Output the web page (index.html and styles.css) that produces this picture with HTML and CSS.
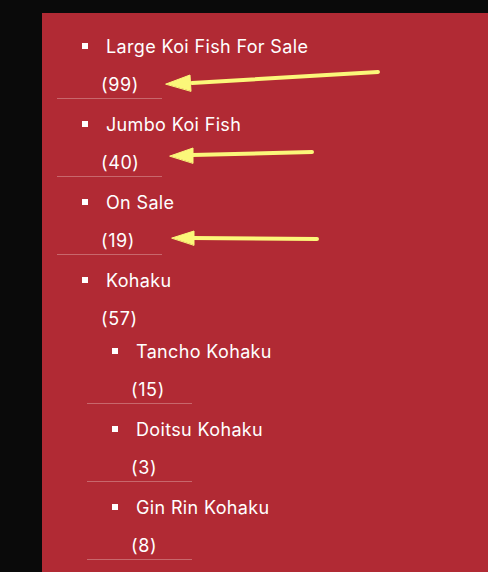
FILE: index.html
```html
<!DOCTYPE html>
<html>
<head>
<meta charset="utf-8">
<link rel="stylesheet" href="styles.css">
</head>
<body>
<div class="panel">
  <ul class="cats">
    <li class="item">
      <div class="title"><span class="sq"></span>Large Koi Fish For Sale</div>
      <div class="count line">(99)</div>
    </li>
    <li class="item">
      <div class="title"><span class="sq"></span>Jumbo Koi Fish</div>
      <div class="count line">(40)</div>
    </li>
    <li class="item">
      <div class="title"><span class="sq"></span>On Sale</div>
      <div class="count line">(19)</div>
    </li>
    <li class="item">
      <div class="title"><span class="sq"></span>Kohaku</div>
      <div class="count">(57)</div>
      <ul class="sub">
        <li class="item">
          <div class="title"><span class="sq"></span>Tancho Kohaku</div>
          <div class="count line">(15)</div>
        </li>
        <li class="item">
          <div class="title"><span class="sq"></span>Doitsu Kohaku</div>
          <div class="count line">(3)</div>
        </li>
        <li class="item">
          <div class="title"><span class="sq"></span>Gin Rin Kohaku</div>
          <div class="count line">(8)</div>
        </li>
      </ul>
    </li>
  </ul>
  <svg class="arrows" width="446" height="300" viewBox="0 0 446 300">
    <g fill="#fbf77a" stroke="#fbf77a" stroke-linecap="round" stroke-linejoin="round">
      <line x1="336" y1="59" x2="150" y2="70" stroke-width="4"/>
      <polygon points="124,71 148,62 149,78" stroke-width="1"/>
      <line x1="270" y1="139" x2="150" y2="142" stroke-width="4"/>
      <polygon points="128,143 151,135 151,150" stroke-width="1"/>
      <line x1="275" y1="226" x2="150" y2="225" stroke-width="4"/>
      <polygon points="130,225 152,218 152,232" stroke-width="1"/>
    </g>
  </svg>
</div>
</body>
</html>
```
FILE: styles.css
```css
html, body {
  margin: 0;
  padding: 0;
  background: #0a0a0a;
}
body {
  font-family: "Inter", "Open Sans", sans-serif;
  color: #ffffff;
}
.panel {
  position: relative;
  margin: 13px 0 0 42px;
  height: 559px;
  background: #b12a34;
  padding-top: 20px;
  box-sizing: border-box;
  overflow: hidden;
}
.cats, .sub {
  list-style: none;
  margin: 0;
  padding: 0 0 0 15px;
}
.sub {
  padding-left: 30px;
  margin-left: 0;
  margin-top: 6px;
}
.item {
  display: flex;
  flex-direction: column;
}
.title {
  display: flex;
  align-items: center;
  height: 26px;
  font-size: 18px;
  letter-spacing: 0.35px;
  padding-left: 25px;
}
.sq {
  width: 6px;
  height: 6px;
  background: #fff;
  margin-right: 18px;
}
.count {
  height: 26px;
  line-height: 26px;
  font-size: 18px;
  letter-spacing: 0.6px;
  margin-top: 13px;
  padding-left: 44px;
  width: 61px;
}
.count.line {
  border-bottom: 1px solid #c8676c;
  margin-bottom: 12px;
}
.arrows {
  position: absolute;
  left: 0;
  top: 0;
}
```
